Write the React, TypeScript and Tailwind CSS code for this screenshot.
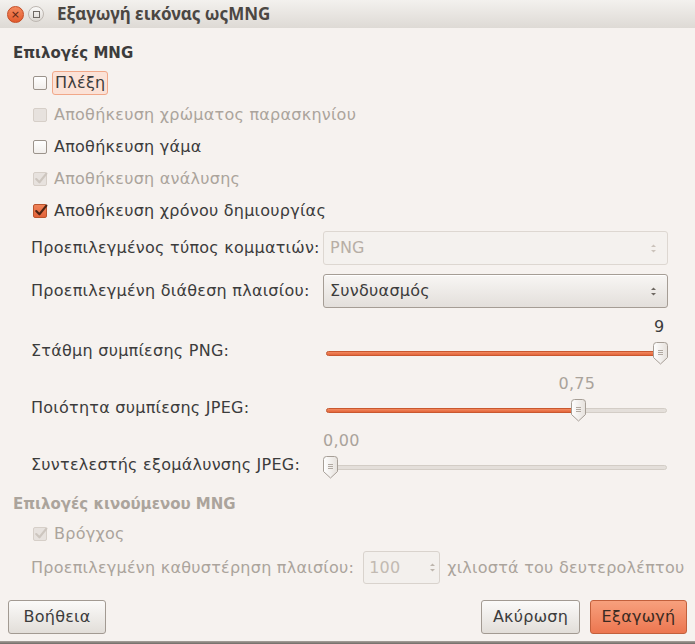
import React from 'react';

// GTK / Ubuntu Ambiance styled export dialog

const Check: React.FC<{ checked?: boolean; disabled?: boolean }> = ({ checked, disabled }) => {
    let box = 'border-[#9b938b] bg-gradient-to-b from-white to-[#f1eeeb]';
    if (disabled) box = 'border-[#d6cfc8] bg-[#e7e2de]';
    if (checked && !disabled) box = 'border-[#b9542d] bg-gradient-to-b from-[#f08358] to-[#e2633a]';
    return (
        <span className={`relative inline-flex h-[14px] w-[14px] shrink-0 rounded-[2px] border ${box}`}>
            {checked && (
                <svg viewBox="0 0 14 14" className="absolute -left-px -top-[2px] h-[15px] w-[15px]">
                    <path
                        d="M3 7.5 L6 10.5 L12.5 2.5"
                        fill="none"
                        stroke={disabled ? '#cdc6bf' : '#4e2414'}
                        strokeWidth="2"
                        strokeLinecap="round"
                        strokeLinejoin="round"
                    />
                </svg>
            )}
        </span>
    );
};

const Updown: React.FC<{ color: string }> = ({ color }) => (
    <svg viewBox="0 0 7 11" className="h-[11px] w-[7px]">
        <path d="M1 4 L3.5 1.5 L6 4 Z" fill={color} />
        <path d="M1 7 L3.5 9.5 L6 7 Z" fill={color} />
    </svg>
);

const Thumb: React.FC = () => (
    <svg viewBox="0 0 15 23" className="h-[23px] w-[15px]">
        <defs>
            <linearGradient id="tg" x1="0" y1="0" x2="1" y2="0">
                <stop offset="0" stopColor="#ffffff" />
                <stop offset="1" stopColor="#e6e1dc" />
            </linearGradient>
        </defs>
        <path
            d="M3.5 0.5 H11.5 A3 3 0 0 1 14.5 3.5 V15.5 L7.5 22 L0.5 15.5 V3.5 A3 3 0 0 1 3.5 0.5 Z"
            fill="url(#tg)"
            stroke="#a69e96"
        />
        <path d="M5 8.5 H10 M5 10.5 H10 M5 12.5 H10" stroke="#b1a9a1" strokeWidth="1" />
    </svg>
);

const Slider: React.FC<{ value: number; min: number; max: number; label: string; dim?: boolean }> = ({
    value,
    min,
    max,
    label,
    dim,
}) => {
    const frac = (value - min) / (max - min);
    // thumb travels 7px .. width-8px of the 345px control
    const x = 7 + frac * 330;
    const textLeft = Math.max(0, x - 19);
    return (
        <div className="relative h-[48px]">
            <span
                className={`absolute top-0 h-[20px] leading-[20px] ${dim ? 'text-[#aaa39b]' : 'text-[#3c3c3c]'}`}
                style={frac > 0.9 ? { left: x - 6 } : { left: textLeft }}
            >
                {label}
            </span>
            <div className="absolute left-[3px] right-px top-[34px] h-[5px] rounded-full border border-[#d3cdc6] bg-[#e4dfda]" />
            <div
                className="absolute left-[3px] top-[34px] h-[5px] rounded-full border border-[#c9582f] bg-gradient-to-b from-[#f28a5f] to-[#e3643a]"
                style={{ width: x }}
            />
            <div className="absolute top-[25px]" style={{ left: x - 7 }}>
                <Thumb />
            </div>
        </div>
    );
};

const Combo: React.FC<{ text: string; disabled?: boolean }> = ({ text, disabled }) => (
    <div
        className={`flex h-[34px] items-center justify-between rounded-[3px] border pl-[6px] pr-[10px] ${
            disabled
                ? 'border-[#ddd7d1] bg-[#f4f1ee] text-[#b7aea5]'
                : 'border-[#a59d95] bg-gradient-to-b from-[#f8f6f4] to-[#e3dfdb] text-[#3c3c3c] shadow-[inset_0_1px_0_#fff]'
        }`}
    >
        <span>{text}</span>
        <Updown color={disabled ? '#cbc3bb' : '#6e6862'} />
    </div>
);

const Btn: React.FC<{ children: React.ReactNode; primary?: boolean; w: string }> = ({ children, primary, w }) => (
    <button
        className={`flex h-[34px] items-center justify-center rounded-[3px] border ${w} ${
            primary
                ? 'border-[#c2603c] bg-gradient-to-b from-[#f7a07d] to-[#ec7650] text-[#3a2a22]'
                : 'border-[#a29a92] bg-gradient-to-b from-[#fbfaf9] to-[#e2ded9] text-[#3c3c3c]'
        }`}
    >
        {children}
    </button>
);

const App: React.FC = () => {
    return (
        <div className="flex h-[644px] w-[695px] flex-col bg-[#f6f2ef] font-['DejaVu_Sans',sans-serif] text-[16px] tracking-[0.25px] text-[#3c3c3c]">
            {/* title bar */}
            <div className="flex h-[28px] items-center gap-[4px] bg-gradient-to-b from-[#f3f1ee] to-[#dedad5] pl-[7px]">
                <span className="flex h-[17px] w-[17px] items-center justify-center rounded-full border border-[#c44a22] bg-gradient-to-b from-[#f48a5e] to-[#e25a2c] text-[11px] leading-none text-[#5a2414]">
                    ×
                </span>
                <span className="flex h-[16px] w-[16px] items-center justify-center rounded-full border border-[#bdb7b1] bg-gradient-to-b from-[#fbfaf9] to-[#dcd8d3]">
                    <span className="h-[7px] w-[7px] border border-[#6f6a65]" />
                </span>
                <span className="ml-[9px] font-['Noto_Sans',sans-serif] text-[17px] font-bold tracking-normal text-[#4b4743]">
                    Εξαγωγή εικόνας ωςMNG
                </span>
            </div>

            <div className="flex flex-1 flex-col px-[13px] pt-[14px]">
                <div className="h-[22px] text-[15px] font-bold leading-[22px] tracking-normal">Επιλογές MNG</div>

                <div className="mt-[3px] flex flex-col pl-[20px]">
                    <label className="flex h-[32px] items-center gap-[5px]">
                        <Check />
                        <span className="rounded-[3px] border border-[#f1a889] bg-[#fbe2d7] px-[2px] leading-[22px]">Πλέξη</span>
                    </label>
                    <label className="flex h-[32px] items-center gap-[7px] text-[#aba49c]">
                        <Check disabled />
                        <span>Αποθήκευση χρώματος παρασκηνίου</span>
                    </label>
                    <label className="flex h-[32px] items-center gap-[7px]">
                        <Check />
                        <span>Αποθήκευση γάμα</span>
                    </label>
                    <label className="flex h-[32px] items-center gap-[7px] text-[#aba49c]">
                        <Check checked disabled />
                        <span>Αποθήκευση ανάλυσης</span>
                    </label>
                    <label className="flex h-[32px] items-center gap-[7px]">
                        <Check checked />
                        <span>Αποθήκευση χρόνου δημιουργίας</span>
                    </label>
                </div>

                <div className="mt-[4px] grid grid-cols-[284px_1fr] items-end gap-x-2 gap-y-[9px] whitespace-nowrap pl-[18px] pr-[14px]">
                    <span className="self-center">Προεπιλεγμένος τύπος κομματιών:</span>
                    <Combo text="PNG" disabled />
                    <span className="self-center">Προεπιλεγμένη διάθεση πλαισίου:</span>
                    <Combo text="Συνδυασμός" />

                    <span className="mb-[4px] leading-[20px]">Στάθμη συμπίεσης PNG:</span>
                    <Slider value={9} min={0} max={9} label="9" />
                    <span className="mb-[4px] leading-[20px]">Ποιότητα συμπίεσης JPEG:</span>
                    <Slider value={0.75} min={0} max={1} label="0,75" dim />
                    <span className="mb-[4px] leading-[20px]">Συντελεστής εξομάλυνσης JPEG:</span>
                    <Slider value={0} min={0} max={1} label="0,00" dim />
                </div>

                <div className="mt-[14px] h-[22px] text-[15px] font-bold leading-[22px] tracking-normal text-[#aba49c]">
                    Επιλογές κινούμενου MNG
                </div>
                <label className="mt-[3px] flex h-[32px] items-center gap-[7px] pl-[20px] text-[#aba49c]">
                    <Check checked disabled />
                    <span>Βρόγχος</span>
                </label>
                <div className="mt-[1px] flex items-center whitespace-nowrap pl-[18px] text-[#aba49c]">
                    <span>Προεπιλεγμένη καθυστέρηση πλαισίου:</span>
                    <div className="ml-[9px] mr-[7px] flex h-[33px] w-[77px] shrink-0 items-center justify-between rounded-[3px] border border-[#d9d3cd] bg-[#f3f0ed] pl-[5px] pr-[3px]">
                        <span className="text-[#c2bab2]">100</span>
                        <Updown color="#bdb5ad" />
                    </div>
                    <span>χιλιοστά του δευτερολέπτου</span>
                </div>

                <div className="mt-auto mb-[7px] -mx-[5px] flex items-center">
                    <Btn w="w-[98px]">Βοήθεια</Btn>
                    <div className="flex-1" />
                    <Btn w="w-[99px]">Ακύρωση</Btn>
                    <div className="w-[10px]" />
                    <Btn w="w-[97px]" primary>
                        Εξαγωγή
                    </Btn>
                </div>
            </div>
            <div className="h-[3px] bg-gradient-to-b from-[#a9a39d] to-[#6f6a65]" />
        </div>
    );
};

export default App;
